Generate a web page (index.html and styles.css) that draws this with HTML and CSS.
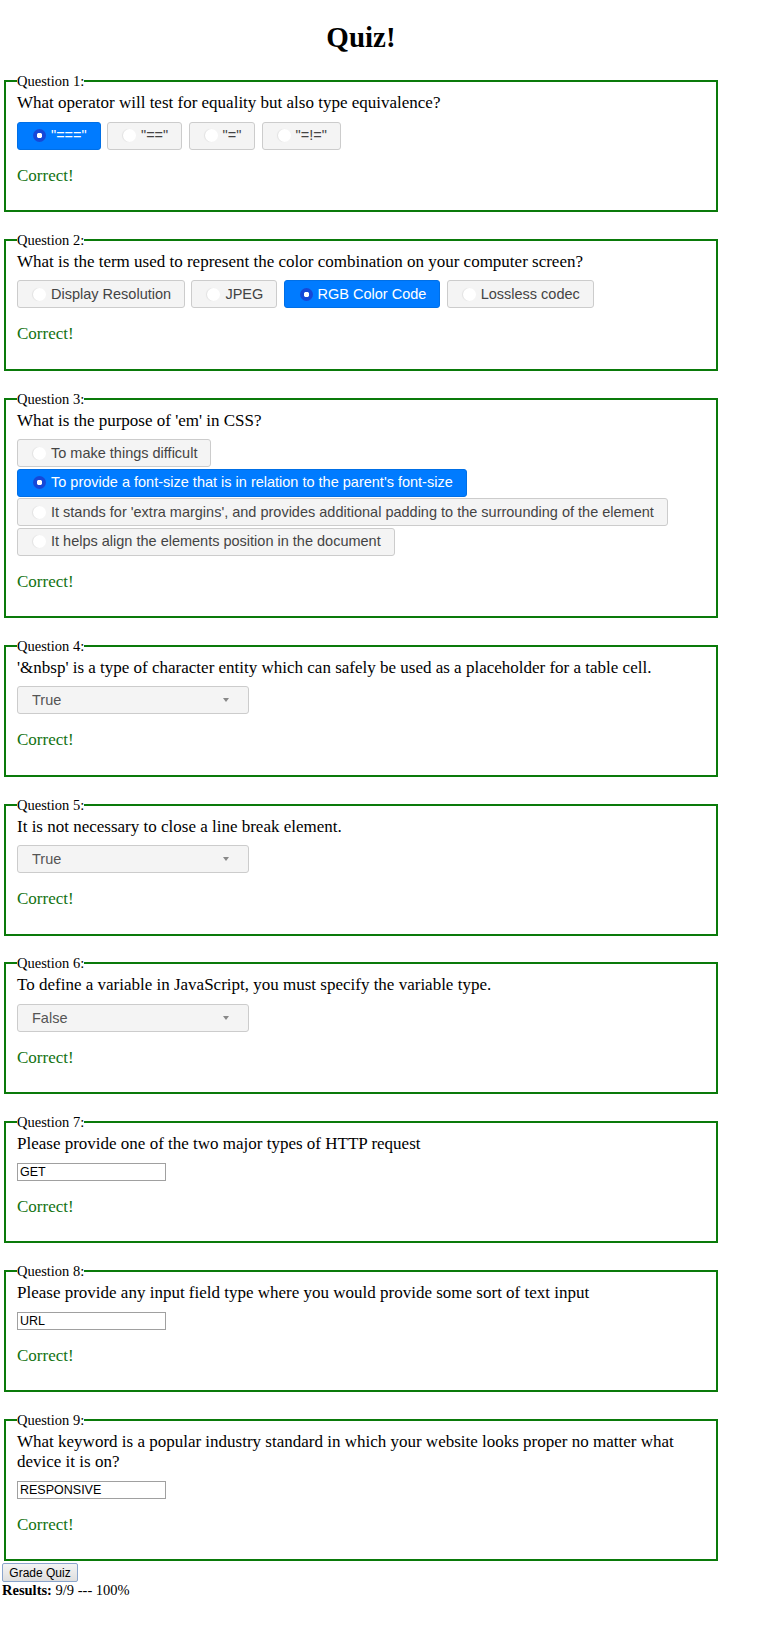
FILE: index.html
```html
<!DOCTYPE html>
<html lang="en">
<head>
<meta charset="utf-8">
<title>Quiz!</title>
<link rel="stylesheet" href="styles.css">
</head>
<body>
<h1 class="title">Quiz!</h1>
<form class="quiz">
  <fieldset class="question">
    <legend>Question 1:</legend>
    <div class="prompt">What operator will test for equality but also type equivalence?</div>
    <div class="options">
      <label class="opt active"><input type="radio" name="q1" checked>"==="</label>
      <label class="opt"><input type="radio" name="q1">"=="</label>
      <label class="opt"><input type="radio" name="q1">"="</label>
      <label class="opt"><input type="radio" name="q1">"=!="</label>
    </div>
    <p class="feedback">Correct!</p>
  </fieldset>

  <fieldset class="question">
    <legend>Question 2:</legend>
    <div class="prompt">What is the term used to represent the color combination on your computer screen?</div>
    <div class="options">
      <label class="opt"><input type="radio" name="q2">Display Resolution</label>
      <label class="opt"><input type="radio" name="q2">JPEG</label>
      <label class="opt active"><input type="radio" name="q2" checked>RGB Color Code</label>
      <label class="opt"><input type="radio" name="q2">Lossless codec</label>
    </div>
    <p class="feedback">Correct!</p>
  </fieldset>

  <fieldset class="question">
    <legend>Question 3:</legend>
    <div class="prompt">What is the purpose of 'em' in CSS?</div>
    <div class="options vertical">
      <label class="opt"><input type="radio" name="q3">To make things difficult</label>
      <label class="opt active"><input type="radio" name="q3" checked>To provide a font-size that is in relation to the parent's font-size</label>
      <label class="opt"><input type="radio" name="q3">It stands for 'extra margins', and provides additional padding to the surrounding of the element</label>
      <label class="opt"><input type="radio" name="q3">It helps align the elements position in the document</label>
    </div>
    <p class="feedback">Correct!</p>
  </fieldset>

  <fieldset class="question">
    <legend>Question 4:</legend>
    <div class="prompt">'&amp;nbsp' is a type of character entity which can safely be used as a placeholder for a table cell.</div>
    <div class="select-wrap">
      <select class="select"><option selected>True</option><option>False</option></select>
    </div>
    <p class="feedback">Correct!</p>
  </fieldset>

  <fieldset class="question">
    <legend>Question 5:</legend>
    <div class="prompt">It is not necessary to close a line break element.</div>
    <div class="select-wrap">
      <select class="select"><option selected>True</option><option>False</option></select>
    </div>
    <p class="feedback">Correct!</p>
  </fieldset>

  <fieldset class="question">
    <legend>Question 6:</legend>
    <div class="prompt">To define a variable in JavaScript, you must specify the variable type.</div>
    <div class="select-wrap">
      <select class="select"><option>True</option><option selected>False</option></select>
    </div>
    <p class="feedback">Correct!</p>
  </fieldset>

  <fieldset class="question">
    <legend>Question 7:</legend>
    <div class="prompt">Please provide one of the two major types of HTTP request</div>
    <input class="text-input" type="text" value="GET">
    <p class="feedback">Correct!</p>
  </fieldset>

  <fieldset class="question">
    <legend>Question 8:</legend>
    <div class="prompt">Please provide any input field type where you would provide some sort of text input</div>
    <input class="text-input" type="text" value="URL">
    <p class="feedback">Correct!</p>
  </fieldset>

  <fieldset class="question">
    <legend>Question 9:</legend>
    <div class="prompt">What keyword is a popular industry standard in which your website looks proper no matter what device it is on?</div>
    <input class="text-input" type="text" value="RESPONSIVE">
    <p class="feedback">Correct!</p>
  </fieldset>

  <button type="button" class="grade">Grade Quiz</button>
  <div class="results"><b>Results:</b> 9/9 --- 100%</div>
</form>
</body>
</html>
```
FILE: styles.css
```css
html { background: #fff; }
body {
  margin: 0 2px;
  width: 718px;
  font-family: "Liberation Serif", "Times New Roman", serif;
  font-size: 17px;
  line-height: 20.5px;
  color: #000;
}
.title {
  margin: 20px 0 18px;
  font-size: 29px;
  line-height: 34px;
  font-weight: bold;
  text-align: center;
}
.quiz { margin: 0; }
.question {
  margin: 0 2px;
  padding: 3px 11px 8px;
  border: 2px solid #0a7a0a;
  min-width: 0;
}
.question + .question { margin-top: 18.8px; }
.question legend {
  padding: 0;
  font-size: 14.5px;
  line-height: 18px;
}
.prompt { margin: 0 0 8px; }
.options {
  display: flex;
  flex-wrap: wrap;
  gap: 6.3px;
}
.options.vertical {
  flex-direction: column;
  align-items: flex-start;
  gap: 1.5px;
}
.opt {
  display: flex;
  align-items: center;
  box-sizing: border-box;
  height: 28px;
  padding: 0 13px 0 10px;
  border: 1px solid #cccccc;
  border-radius: 3px;
  background: #f4f4f4;
  color: #444;
  font-family: "Liberation Sans", Arial, sans-serif;
  font-size: 14.5px;
  white-space: nowrap;
}
.opt.active {
  background: #007bff;
  border-color: #006fe6;
  color: #fff;
}
.opt input {
  -webkit-appearance: none;
  appearance: none;
  width: 13px;
  height: 13px;
  margin: 0 5px 0 5px;
  border-radius: 50%;
  background: #fff;
  box-shadow: -1px 0 1px rgba(0,0,0,0.08);
  flex: none;
}
.opt input:checked {
  background: radial-gradient(circle, #fff 0 2.6px, #1548d8 3px);
  box-shadow: none;
}
.select-wrap {
  position: relative;
  width: 232px;
}
.select {
  -webkit-appearance: none;
  appearance: none;
  display: block;
  box-sizing: border-box;
  width: 232px;
  height: 28px;
  margin: 0;
  padding: 0 0 0 14px;
  border: 1px solid #cccccc;
  border-radius: 3px;
  background: #f4f4f4;
  color: #555;
  font-family: "Liberation Sans", Arial, sans-serif;
  font-size: 14.5px;
}
.select-wrap::after {
  content: "";
  position: absolute;
  right: 20px;
  top: 12px;
  border-top: 4px solid #888;
  border-left: 3px solid transparent;
  border-right: 3px solid transparent;
}
.text-input {
  display: block;
  box-sizing: border-box;
  width: 149px;
  height: 18px;
  margin: 0;
  padding: 0 2px;
  border: 1px solid #a0a0a0;
  font-family: "Liberation Sans", Arial, sans-serif;
  font-size: 12.5px;
  color: #000;
  background: #fff;
}
.feedback {
  margin: 16px 0;
  color: #127312;
}
.grade {
  display: block;
  box-sizing: border-box;
  width: 76px;
  height: 19px;
  margin: 2px 0 0;
  padding: 0 4px;
  border: 1px solid #8aa5cc;
  border-radius: 2px;
  background: linear-gradient(#f4f4f4, #dedede);
  font-family: "Liberation Sans", Arial, sans-serif;
  font-size: 12px;
  color: #000;
}
.results {
  font-size: 14.5px;
  line-height: 16px;
}
```
